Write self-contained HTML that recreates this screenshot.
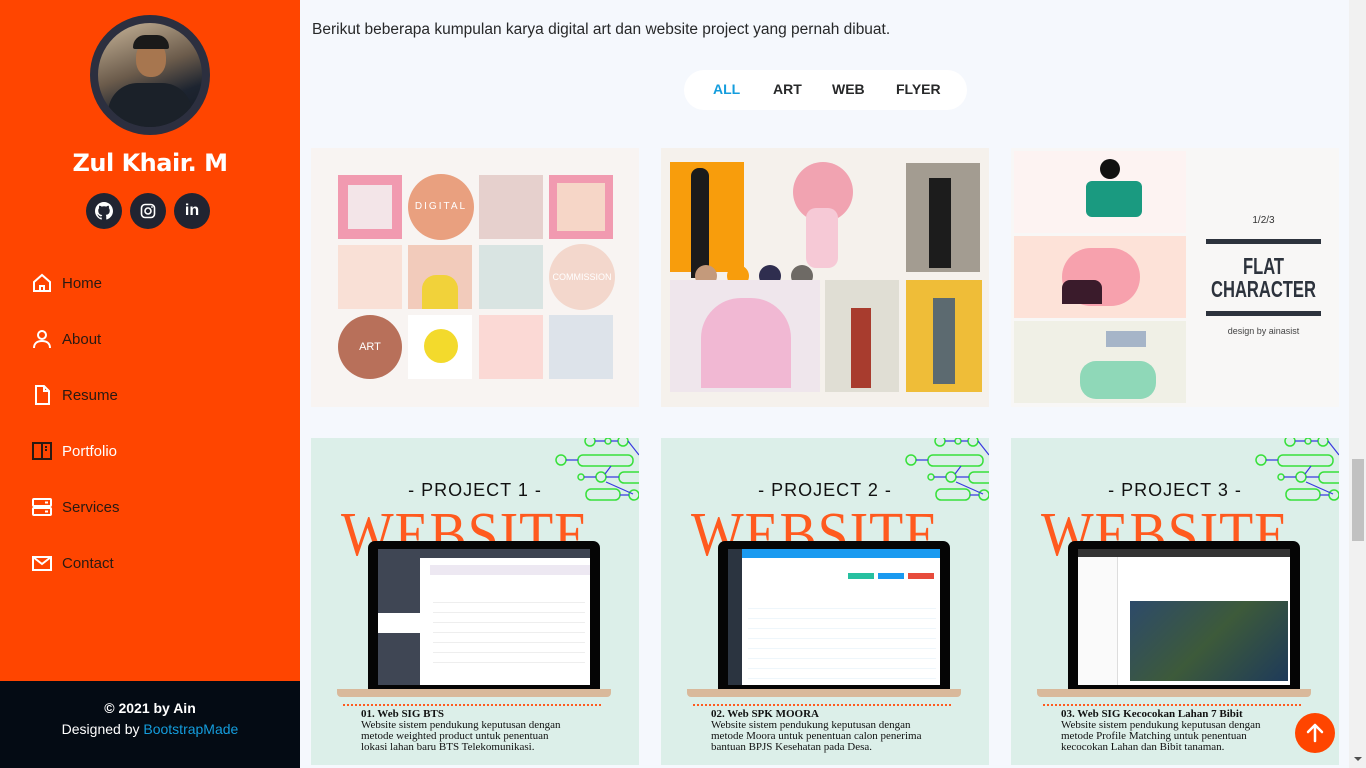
<!DOCTYPE html>
<html><head><meta charset="utf-8"><style>
*{margin:0;padding:0;box-sizing:border-box}
body{width:1366px;height:768px;overflow:hidden;background:#f5f8fd;font-family:"Liberation Sans",sans-serif;position:relative}
.abs{position:absolute}
#side{left:0;top:0;width:300px;height:768px;background:#ff4500}
.nav{position:absolute;left:31px;font-size:15px;color:#2a1a12;display:flex;align-items:center}
.nav svg{width:22px;height:22px;margin-right:9px}
.soc{position:absolute;top:193px;width:36px;height:36px;border-radius:50%;background:#212431;display:flex;align-items:center;justify-content:center}
.card{position:absolute;width:328px;overflow:hidden}
.t{position:absolute}
.proj{background:#dcefe9;height:327px;top:438px}
.ptitle{position:absolute;top:42px;width:100%;text-align:center;font-size:18px;color:#111;letter-spacing:1px}
.web{position:absolute;left:30px;top:62px;font-family:"Liberation Serif",serif;font-size:62px;color:#ff5a1f;letter-spacing:1px;transform:scaleX(0.9);transform-origin:left top}
.lap{position:absolute;left:57px;top:103px;width:232px;height:152px;background:#050505;border-radius:7px 7px 0 0}
.scr{position:absolute;left:10px;top:8px;width:212px;height:136px;background:#fff}
.base{position:absolute;left:26px;top:251px;width:274px;height:8px;background:#d9b99b;border-radius:0 0 4px 4px}
.dots{position:absolute;left:32px;top:266px;width:258px;border-top:2px dotted #ff5a1f}
.desc{position:absolute;left:50px;top:271px;font-family:"Liberation Serif",serif;font-size:11px;line-height:11px;color:#111}
.desc b{font-size:11px}
</style></head><body>
<div id="side" class="abs">
 <div class="abs" style="left:90px;top:15px;width:120px;height:120px;border-radius:50%;background:#2c2f3f"></div>
 <div class="abs" style="left:98px;top:23px;width:104px;height:104px;border-radius:50%;background:linear-gradient(160deg,#c9b69a,#6b5b4b 45%,#1d2430 70%,#141a24);overflow:hidden">
  <div class="abs" style="left:38px;top:18px;width:30px;height:36px;border-radius:45%;background:#a7764f"></div>
  <div class="abs" style="left:35px;top:12px;width:36px;height:14px;border-radius:12px 12px 2px 2px;background:#1a1a1a"></div>
  <div class="abs" style="left:10px;top:60px;width:84px;height:50px;border-radius:30px 30px 0 0;background:#1b2129"></div>
 </div>
 <div class="abs" style="top:149px;width:300px;text-align:center;color:#fff;font-weight:bold;font-size:24px;font-family:'DejaVu Sans',sans-serif;letter-spacing:-0.5px">Zul Khair. M</div>
 <div class="soc" style="left:86px"><svg width="18" height="18" viewBox="0 0 16 16"><path fill="#fff" d="M8 0C3.6 0 0 3.6 0 8c0 3.5 2.3 6.5 5.5 7.6.4.1.5-.2.5-.4v-1.4c-2.2.5-2.7-1-2.7-1-.4-.9-.9-1.2-.9-1.2-.7-.5.1-.5.1-.5.8.1 1.2.8 1.2.8.7 1.2 1.900.9 2.300.7.1-.5.3-.9.5-1.1-1.8-.2-3.6-.9-3.6-4 0-.9.3-1.6.8-2.1-.1-.2-.4-1 .1-2.1 0 0 .7-.2 2.2.8.6-.2 1.3-.3 2-.3s1.4.1 2 .3c1.5-1 2.2-.8 2.2-.8.4 1.1.2 1.9.1 2.1.5.6.8 1.3.8 2.1 0 3.1-1.9 3.7-3.6 3.9.3.3.5.8.5 1.5v2.2c0 .2.1.5.6.4C13.7 14.5 16 11.5 16 8c0-4.4-3.6-8-8-8z"/></svg></div>
 <div class="soc" style="left:130px"><svg width="16" height="16" viewBox="0 0 16 16"><rect x="1.5" y="1.5" width="13" height="13" rx="3.5" fill="none" stroke="#fff" stroke-width="1.6"/><circle cx="8" cy="8" r="3" fill="none" stroke="#fff" stroke-width="1.6"/><circle cx="12" cy="4" r="0.9" fill="#fff"/></svg></div>
 <div class="soc" style="left:174px;color:#fff;font-weight:bold;font-size:16px">in</div>

 <div class="nav" style="top:272px"><svg viewBox="0 0 22 22" fill="none" stroke="#fff" stroke-width="2"><path d="M3 10L11 3l8 7v9H3z"/><path d="M9 19v-5h4v5"/></svg>Home</div>
 <div class="nav" style="top:328px"><svg viewBox="0 0 22 22" fill="none" stroke="#fff" stroke-width="2"><circle cx="11" cy="7" r="4"/><path d="M3 20c0-5 3.5-7 8-7s8 2 8 7"/></svg>About</div>
 <div class="nav" style="top:384px"><svg viewBox="0 0 22 22" fill="none" stroke="#fff" stroke-width="2"><path d="M5 2h8l5 5v13H5z"/><path d="M13 2v5h5"/></svg>Resume</div>
 <div class="nav" style="top:440px;color:#fff"><svg viewBox="0 0 22 22" fill="none" stroke="#2a1a12" stroke-width="2"><rect x="2" y="3" width="18" height="16"/><path d="M11 3v16M14 7h2M14 10h2"/></svg>Portfolio</div>
 <div class="nav" style="top:496px"><svg viewBox="0 0 22 22" fill="none" stroke="#fff" stroke-width="2"><rect x="2" y="3" width="18" height="7" rx="1"/><rect x="2" y="12" width="18" height="7" rx="1"/><path d="M14 6.5h3M14 15.5h3"/></svg>Services</div>
 <div class="nav" style="top:552px"><svg viewBox="0 0 22 22" fill="none" stroke="#fff" stroke-width="2"><rect x="2" y="5" width="18" height="13"/><path d="M2 5l9 7 9-7"/></svg>Contact</div>
 <div class="abs" style="left:0;top:681px;width:300px;height:87px;background:#040b14;color:#fff;text-align:center;font-size:14px;padding-top:17px;line-height:21px"><b>© 2021 by Ain</b><br>Designed by <span style="color:#149ddd">BootstrapMade</span></div>
</div>

<div class="abs" style="left:312px;top:21px;font-size:15.5px;color:#272829">Berikut beberapa kumpulan karya digital art dan website project yang pernah dibuat.</div>
<div class="abs" style="left:684px;top:70px;width:283px;height:40px;background:#fff;border-radius:20px;font-size:14px;font-weight:bold;color:#272829">
 <span class="t" style="left:29px;top:11px;color:#149ddd">ALL</span>
 <span class="t" style="left:89px;top:11px">ART</span>
 <span class="t" style="left:148px;top:11px">WEB</span>
 <span class="t" style="left:212px;top:11px">FLYER</span>
</div>

<!-- card 1 -->
<div class="card" style="left:311px;top:148px;height:259px;background:#f8f4f2">
 <div class="t" style="left:27px;top:27px;width:64px;height:64px;background:#f19ab0"><div class="t" style="left:10px;top:10px;width:44px;height:44px;background:#f3e5e8"></div></div>
 <div class="t" style="left:97px;top:26px;width:66px;height:66px;border-radius:50%;background:#e9a07f;color:#fff;font-size:10px;text-align:center;line-height:66px;letter-spacing:2px">DIGITAL</div>
 <div class="t" style="left:168px;top:27px;width:64px;height:64px;background:#e6d0cd"></div>
 <div class="t" style="left:238px;top:27px;width:64px;height:64px;background:#f19ab0"><div class="t" style="left:8px;top:8px;width:48px;height:48px;background:#f6d6c7"></div></div>
 <div class="t" style="left:27px;top:97px;width:64px;height:64px;background:#f9e0d6"></div>
 <div class="t" style="left:97px;top:97px;width:64px;height:64px;background:#f2cbbb"><div class="t" style="left:14px;top:30px;width:36px;height:34px;background:#f1d23a;border-radius:14px 14px 0 0"></div></div>
 <div class="t" style="left:168px;top:97px;width:64px;height:64px;background:#d9e4e2"></div>
 <div class="t" style="left:238px;top:96px;width:66px;height:66px;border-radius:50%;background:#f3d7cc;color:#fff;font-size:9px;text-align:center;line-height:66px">COMMISSION</div>
 <div class="t" style="left:27px;top:167px;width:64px;height:64px;border-radius:50%;background:#b8705a;color:#fff;font-size:11px;line-height:64px;text-align:center">ART</div>
 <div class="t" style="left:97px;top:167px;width:64px;height:64px;background:#fff"><div class="t" style="left:16px;top:14px;width:34px;height:34px;border-radius:50%;background:#f3da2c"></div></div>
 <div class="t" style="left:168px;top:167px;width:64px;height:64px;background:#fbd9d5"></div>
 <div class="t" style="left:238px;top:167px;width:64px;height:64px;background:#dde3ea"></div>
</div>

<!-- card 2 -->
<div class="card" style="left:661px;top:148px;height:259px;background:#f5f1ec">
 <div class="t" style="left:9px;top:14px;width:74px;height:110px;background:#f89d0c"></div>
 <div class="t" style="left:30px;top:20px;width:18px;height:110px;background:#1b1b1b;border-radius:8px 8px 0 0"></div>
 <div class="t" style="left:132px;top:14px;width:60px;height:60px;border-radius:50%;background:#f1a3b1"></div>
 <div class="t" style="left:145px;top:60px;width:32px;height:60px;background:#f6c9d6;border-radius:10px"></div>
 <div class="t" style="left:245px;top:15px;width:74px;height:109px;background:#a39c91"></div>
 <div class="t" style="left:268px;top:30px;width:22px;height:90px;background:#1c1c1c"></div>
 <div class="t" style="left:34px;top:117px;width:22px;height:22px;border-radius:50%;background:#c49a7b"></div>
 <div class="t" style="left:66px;top:117px;width:22px;height:22px;border-radius:50%;background:#f89d0c"></div>
 <div class="t" style="left:98px;top:117px;width:22px;height:22px;border-radius:50%;background:#2f2e4f"></div>
 <div class="t" style="left:130px;top:117px;width:22px;height:22px;border-radius:50%;background:#6e6a65"></div>
 <div class="t" style="left:9px;top:132px;width:150px;height:112px;background:#efe6ec"></div>
 <div class="t" style="left:40px;top:150px;width:90px;height:90px;background:#f1b8d3;border-radius:40px 40px 0 0"></div>
 <div class="t" style="left:164px;top:132px;width:74px;height:112px;background:#e0ded4"></div>
 <div class="t" style="left:190px;top:160px;width:20px;height:80px;background:#a83c2e"></div>
 <div class="t" style="left:245px;top:132px;width:76px;height:112px;background:#efbd38"></div>
 <div class="t" style="left:272px;top:150px;width:22px;height:86px;background:#5c6a70"></div>
</div>

<!-- card 3 -->
<div class="card" style="left:1011px;top:148px;height:259px;background:#f8f7f6">
 <div class="t" style="left:3px;top:3px;width:172px;height:82px;background:#fdf3f2"><div class="t" style="left:72px;top:30px;width:56px;height:36px;background:#1a9a80;border-radius:6px"></div><div class="t" style="left:86px;top:8px;width:20px;height:20px;border-radius:50%;background:#111"></div></div>
 <div class="t" style="left:3px;top:88px;width:172px;height:82px;background:#fde2d8"><div class="t" style="left:48px;top:12px;width:78px;height:58px;background:#f7a1ad;border-radius:30px"></div><div class="t" style="left:48px;top:44px;width:40px;height:24px;background:#3a1b2b;border-radius:8px 8px 0 0"></div></div>
 <div class="t" style="left:3px;top:173px;width:172px;height:82px;background:#f0f0e6"><div class="t" style="left:66px;top:40px;width:76px;height:38px;background:#8fd8b8;border-radius:16px"></div><div class="t" style="left:92px;top:10px;width:40px;height:16px;background:#a6b5c8"></div></div>
 <div class="t" style="left:195px;top:67px;width:115px;text-align:center;font-size:10px;color:#333">1/2/3</div>
 <div class="t" style="left:195px;top:91px;width:115px;height:5px;background:#2d333d"></div>
 <div class="t" style="left:165px;top:107px;width:175px;text-align:center;font-size:23px;line-height:23px;font-weight:bold;color:#2d333d;transform:scaleX(0.72)">FLAT<br>CHARACTER</div>
 <div class="t" style="left:195px;top:163px;width:115px;height:5px;background:#2d333d"></div>
 <div class="t" style="left:195px;top:178px;width:115px;text-align:center;font-size:9px;color:#444">design by ainasist</div>
</div>

<!-- project cards -->
<div class="card proj" style="left:311px">
 <svg class="t" style="left:240px;top:0" width="88" height="64"><g fill="none" stroke="#37e03a" stroke-width="1.5"><circle cx="39" cy="3" r="5"/><circle cx="57" cy="3" r="3"/><circle cx="72" cy="3" r="5"/><circle cx="10" cy="22" r="5"/><rect x="27" y="17" width="55" height="11" rx="5"/><circle cx="30" cy="39" r="3"/><circle cx="50" cy="39" r="5"/><rect x="68" y="34" width="30" height="11" rx="5"/><rect x="35" y="51" width="34" height="11" rx="5"/><circle cx="83" cy="57" r="5"/></g><g stroke="#3a3ae0" stroke-width="1.2"><path d="M44 3h10M60 3h7M15 22h12M33 39h12M55 39h13M69 57h9M55 44l27 12M60 28l-6 8M77 3l11 14"/></g></svg>
 <div class="ptitle">- PROJECT 1 -</div>
 <div class="web">WEBSITE</div>
 <div class="lap"><div class="scr"><div class="t" style="left:0;top:0;width:212px;height:9px;background:#3d4451"></div><div class="t" style="left:0;top:0;width:42px;height:136px;background:#3f4654"></div><div class="t" style="left:0;top:64px;width:42px;height:20px;background:#fff"></div><div class="t" style="left:52px;top:16px;width:160px;height:10px;background:#ede8f2"></div><div class="t" style="left:55px;top:44px;width:152px;height:74px;background:repeating-linear-gradient(#fff 0 9px,#eee 9px 10px)"></div></div></div>
 <div class="base"></div><div class="dots"></div>
 <div class="desc"><b>01. Web SIG BTS</b><br>Website sistem pendukung keputusan dengan<br>metode weighted product untuk penentuan<br>lokasi lahan baru BTS Telekomunikasi.</div>
</div>
<div class="card proj" style="left:661px">
 <svg class="t" style="left:240px;top:0" width="88" height="64"><g fill="none" stroke="#37e03a" stroke-width="1.5"><circle cx="39" cy="3" r="5"/><circle cx="57" cy="3" r="3"/><circle cx="72" cy="3" r="5"/><circle cx="10" cy="22" r="5"/><rect x="27" y="17" width="55" height="11" rx="5"/><circle cx="30" cy="39" r="3"/><circle cx="50" cy="39" r="5"/><rect x="68" y="34" width="30" height="11" rx="5"/><rect x="35" y="51" width="34" height="11" rx="5"/><circle cx="83" cy="57" r="5"/></g><g stroke="#3a3ae0" stroke-width="1.2"><path d="M44 3h10M60 3h7M15 22h12M33 39h12M55 39h13M69 57h9M55 44l27 12M60 28l-6 8M77 3l11 14"/></g></svg>
 <div class="ptitle">- PROJECT 2 -</div>
 <div class="web">WEBSITE</div>
 <div class="lap"><div class="scr"><div class="t" style="left:0;top:0;width:212px;height:9px;background:#1a9af0"></div><div class="t" style="left:0;top:0;width:14px;height:136px;background:#2b3440"></div><div class="t" style="left:120px;top:24px;width:86px;height:6px;background:linear-gradient(90deg,#27c0a0 30%,#fff 30% 35%,#1a9af0 35% 65%,#fff 65% 70%,#e74c3c 70%)"></div><div class="t" style="left:20px;top:50px;width:188px;height:80px;background:repeating-linear-gradient(#fff 0 9px,#eef6fb 9px 10px)"></div></div></div>
 <div class="base"></div><div class="dots"></div>
 <div class="desc"><b>02. Web SPK MOORA</b><br>Website sistem pendukung keputusan dengan<br>metode Moora untuk penentuan calon penerima<br>bantuan BPJS Kesehatan pada Desa.</div>
</div>
<div class="card proj" style="left:1011px">
 <svg class="t" style="left:240px;top:0" width="88" height="64"><g fill="none" stroke="#37e03a" stroke-width="1.5"><circle cx="39" cy="3" r="5"/><circle cx="57" cy="3" r="3"/><circle cx="72" cy="3" r="5"/><circle cx="10" cy="22" r="5"/><rect x="27" y="17" width="55" height="11" rx="5"/><circle cx="30" cy="39" r="3"/><circle cx="50" cy="39" r="5"/><rect x="68" y="34" width="30" height="11" rx="5"/><rect x="35" y="51" width="34" height="11" rx="5"/><circle cx="83" cy="57" r="5"/></g><g stroke="#3a3ae0" stroke-width="1.2"><path d="M44 3h10M60 3h7M15 22h12M33 39h12M55 39h13M69 57h9M55 44l27 12M60 28l-6 8M77 3l11 14"/></g></svg>
 <div class="ptitle">- PROJECT 3 -</div>
 <div class="web">WEBSITE</div>
 <div class="lap"><div class="scr"><div class="t" style="left:0;top:0;width:212px;height:8px;background:#333"></div><div class="t" style="left:0;top:8px;width:40px;height:128px;background:#fafafa;border-right:1px solid #ddd"></div><div class="t" style="left:52px;top:52px;width:158px;height:80px;background:linear-gradient(135deg,#2d4a6a,#3d5a3a 50%,#1e3a5a)"></div></div></div>
 <div class="base"></div><div class="dots"></div>
 <div class="desc"><b>03. Web SIG Kecocokan Lahan 7 Bibit</b><br>Website sistem pendukung keputusan dengan<br>metode Profile Matching untuk penentuan<br>kecocokan Lahan dan Bibit tanaman.</div>
</div>

<div class="abs" style="left:1295px;top:713px;width:40px;height:40px;border-radius:50%;background:#ff4500"><svg width="40" height="40" viewBox="0 0 40 40" fill="none" stroke="#fff" stroke-width="2.5" stroke-linecap="round" stroke-linejoin="round"><path d="M20 28V12M13 19l7-7 7 7"/></svg></div>

<div class="abs" style="left:1349px;top:0;width:17px;height:768px;background:#f1f1f1"></div>
<div class="abs" style="left:1352px;top:459px;width:12px;height:82px;background:#c1c1c1"></div>
<div class="abs" style="left:1354px;top:757px;width:0;height:0;border-left:4px solid transparent;border-right:4px solid transparent;border-top:4px solid #505050"></div>
</body></html>
